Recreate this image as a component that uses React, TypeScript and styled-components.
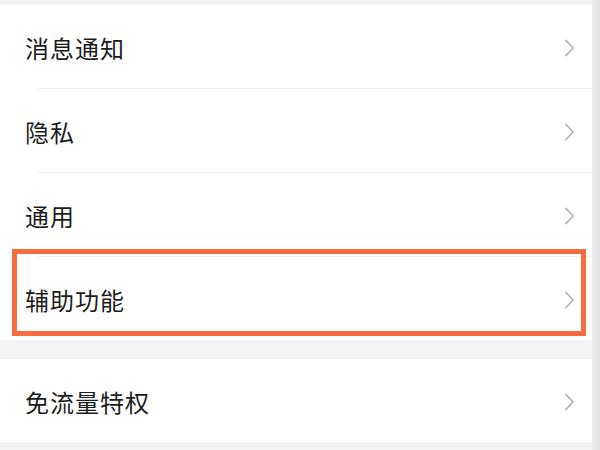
import React from "react";
import styled, { createGlobalStyle } from "styled-components";

const Global = createGlobalStyle`
  html, body { margin: 0; padding: 0; background: #f4f4f6; }
  body { font-family: "Noto Sans CJK SC", "Noto Sans", sans-serif; }
`;

const Page = styled.div`
  width: 600px;
  height: 450px;
  display: flex;
  overflow: hidden;
  background: #f4f4f6;
`;

const Main = styled.div`
  flex: 1;
  display: flex;
  flex-direction: column;
`;

const Edge = styled.div`
  width: 8px;
  background: linear-gradient(to right, #ececee, #e2e2e4);
`;

const Spacer = styled.div<{ $h: number }>`
  height: ${(p) => p.$h}px;
  flex-shrink: 0;
  background: #f4f4f6;
`;

const Group = styled.div`
  background: #fff;
  display: flex;
  flex-direction: column;
`;

const Row = styled.div`
  position: relative;
  height: 83px;
  box-sizing: border-box;
  padding: 3px 17px 0 25px;
  display: flex;
  align-items: center;
  justify-content: space-between;
`;

const Label = styled.span`
  font-size: 24px;
  line-height: 1;
  color: #1c1c1c;
  letter-spacing: 1px;
`;

const Divider = styled.div`
  height: 1px;
  margin-left: 36px;
  background: #f1f1f3;
`;

const Highlight = styled.div`
  position: absolute;
  left: 12px;
  right: 6px;
  top: -8px;
  height: 87px;
  box-sizing: border-box;
  border: 5px solid #f46c40;
  pointer-events: none;
`;

const Chevron = () => (
  <svg width="11" height="18" viewBox="0 0 11 18" fill="none">
    <path d="M2 1.5 L9 9 L2 16.5" stroke="#b3b3b3" strokeWidth="1.8" strokeLinecap="round" strokeLinejoin="round" />
  </svg>
);

const Item = ({ label, highlight }: { label: string; highlight?: boolean }) => (
  <Row>
    <Label>{label}</Label>
    <Chevron />
    {highlight && <Highlight />}
  </Row>
);

export default function App() {
  return (
    <Page>
      <Global />
      <Main>
        <Spacer $h={5} />
        <Group>
          <Item label="消息通知" />
          <Divider />
          <Item label="隐私" />
          <Divider />
          <Item label="通用" />
          <Divider />
          <Item label="辅助功能" highlight />
        </Group>
        <Spacer $h={19} />
        <Group>
          <Item label="免流量特权" />
        </Group>
      </Main>
      <Edge />
    </Page>
  );
}
